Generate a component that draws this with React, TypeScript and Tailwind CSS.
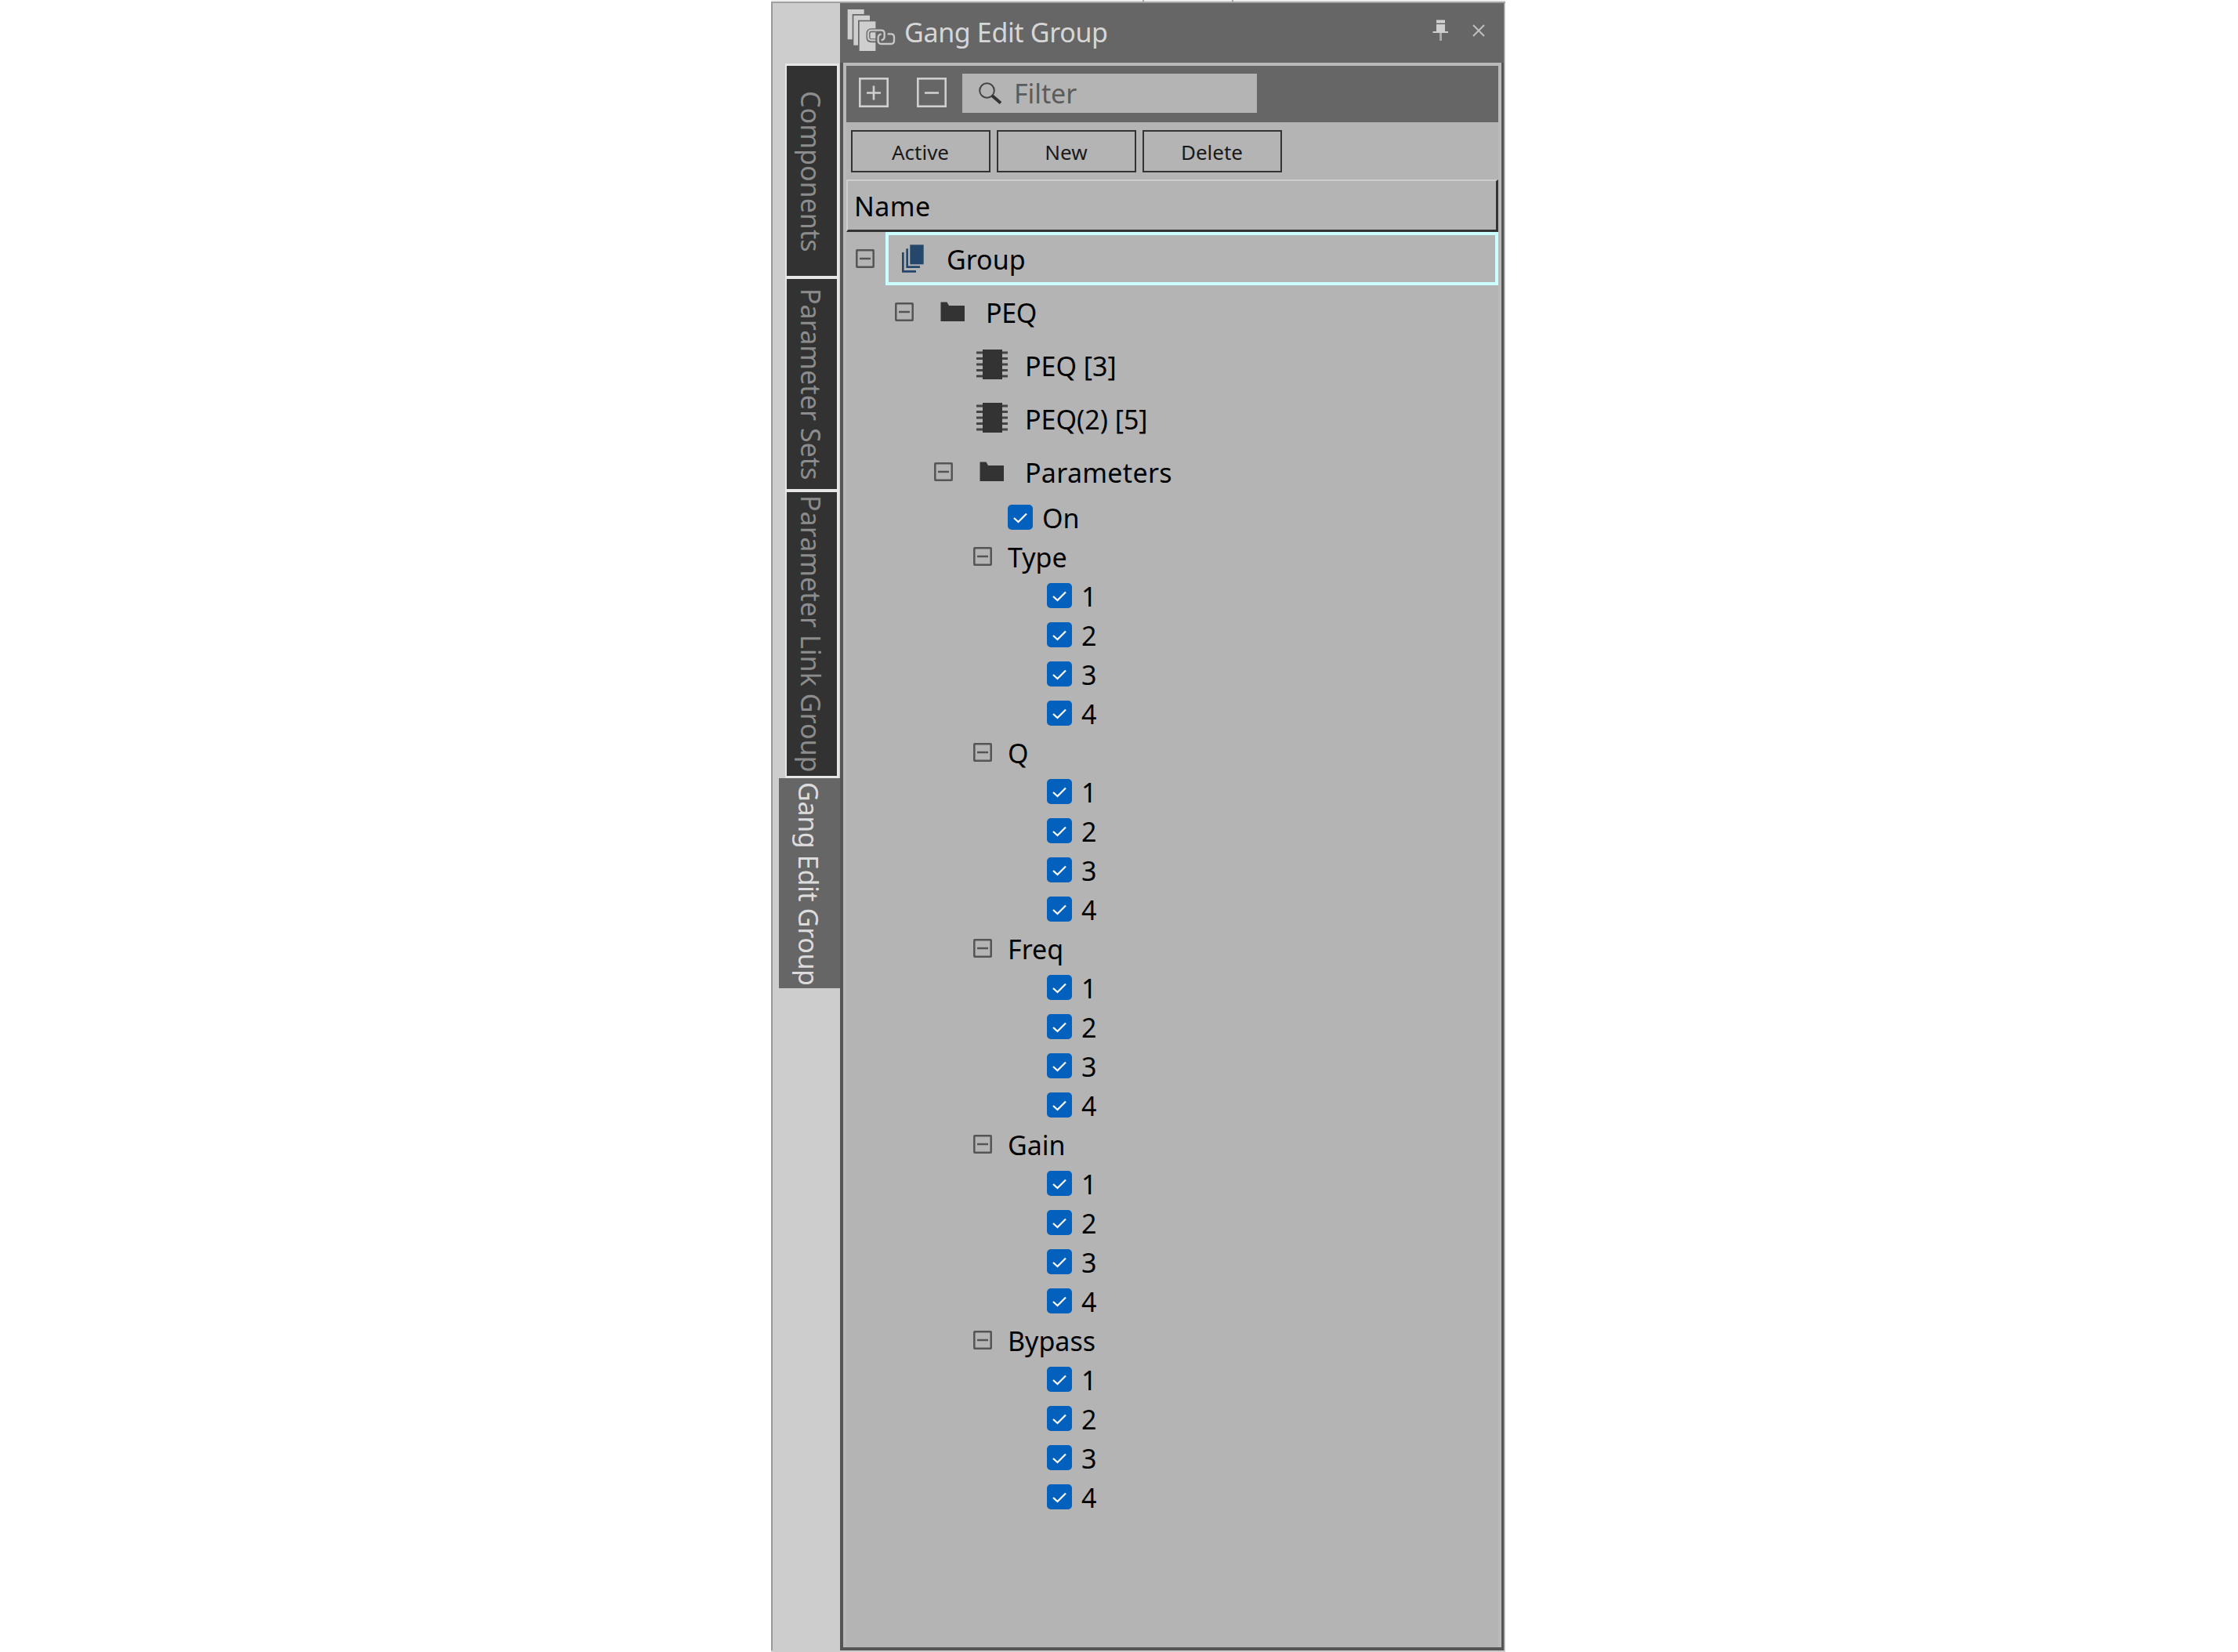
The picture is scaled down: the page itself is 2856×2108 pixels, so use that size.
import type { ReactNode } from "react";

const tabs = [
	{ name: "Components", size: "h-[268px]", spacing: "pt-0.5" },
	{ name: "Parameter Sets", size: "h-[268px]", spacing: "pt-0" },
	{ name: "Parameter Link Group", size: "h-[362px]", spacing: "pt-0" },
];

const params = ["Type", "Q", "Freq", "Gain", "Bypass"];

const Expander = () => (
	<svg viewBox="0 0 24 24" className="h-6 w-6 shrink-0" fill="none" stroke="#555">
		<rect x="1.3" y="1.3" width="21.4" height="21.4" rx="0.5" strokeWidth="2.5" />
		<path d="M5 12H19" strokeWidth="2.5" />
	</svg>
);

const Folder = () => (
	<svg viewBox="0 0 32 26" className="h-[26px] w-8 shrink-0" fill="#333">
		<path d="M0.5 1Q0.5 0.5 1 0.5H8.5L11 5H30.5Q31 5 31 5.5V25H0.5Z" />
	</svg>
);

const Chip = () => (
	<svg viewBox="0 0 40 38" className="mb-0.5 h-[38px] w-10 shrink-0" fill="#333">
		<path
			d="M0 4H40M0 11.5H40M0 19H40M0 26.5H40M0 34H40"
			stroke="#444"
			strokeWidth="2.8"
		/>
		<rect x="8" y="0" width="25" height="38" />
	</svg>
);

const Pages = () => (
	<svg viewBox="272 104 84 108" className="h-9 w-7 shrink-0" fill="#24476b">
		<rect x="303" y="105" width="52" height="75" />
		<path d="M288 120H296V186H341V194H288Z" />
		<path d="M272 134H280V203H326V211H272Z" />
	</svg>
);

const GangIcon = () => (
	<svg viewBox="312 30 192 174" className="h-[58px] w-16 shrink-0">
		<path d="M317 36H380V54H335V151H317Z" fill="#cfcfcf" />
		<path d="M340 59H402V77H357V173H340Z" fill="#cfcfcf" />
		<path d="M362 82H424V195H362Z" fill="#cfcfcf" />
		<g fill="none">
			<path
				d="M428 155H408Q396 155 396 143V128Q396 116 408 116H424"
				stroke="#666"
				strokeWidth="15"
			/>
			<path
				d="M424 154H408Q396 154 396 142V128Q396 116 408 116H446Q458 116 458 128V140Q458 151 446 154"
				stroke="#c8c8c8"
				strokeWidth="7"
			/>
			<path
				d="M446 130Q434 133 434 144V156Q434 168 446 168H483Q495 168 495 156V142Q495 130 483 130H470"
				stroke="#c8c8c8"
				strokeWidth="7"
			/>
		</g>
	</svg>
);

const Check = () => (
	<svg viewBox="0 0 32 32" className="h-8 w-8 shrink-0">
		<rect width="32" height="32" rx="5" fill="#0460bd" />
		<path
			d="M8 17L13.5 22L24 11.5"
			fill="none"
			stroke="#fff"
			strokeWidth="2.2"
		/>
	</svg>
);

const Label = ({ children }: { children: ReactNode }) => (
	<span className="pt-0.5">{children}</span>
);

const CheckRow = ({ name, indent }: { name: string; indent: string }) => (
	<li className={`flex h-[50px] items-center gap-3 ${indent}`}>
		<Check />
		<Label>{name}</Label>
	</li>
);

const SideTabs = () => (
	<div className="flex w-[88px] flex-col items-end border-l-2 border-[#999] bg-[#cdcdcd] pt-[77px]">
		<div className="mr-[1px] flex flex-col gap-1 border-[3px] border-l-2 border-[#e6e6e6] bg-[#e6e6e6] text-[#8c8c8c]">
			{tabs.map((tab) => (
				<div
					key={tab.name}
					className={`flex w-16 items-center justify-center bg-[#323232] pr-[3px] tracking-[0.05px] [writing-mode:vertical-rl] ${tab.size} ${tab.spacing}`}
				>
					{tab.name}
				</div>
			))}
		</div>
		<div className="flex h-[268px] w-[78px] items-center justify-center bg-[#666] pt-0.5 pr-0.5 tracking-[-0.35px] text-[#dcdcdc] [writing-mode:vertical-rl]">
			Gang Edit Group
		</div>
	</div>
);

const TitleBar = () => (
	<div className="flex h-[76px] items-start bg-[#666] pl-2 text-[#d6d6d6]">
		<div className="pt-1.5">
			<GangIcon />
		</div>
		<h1 className="ml-[10px] pt-[14px] tracking-[-0.35px]">Gang Edit Group</h1>
		<svg viewBox="0 0 20 28" className="mt-[21px] ml-auto h-7 w-5" fill="#cfcfcf">
			<rect x="5" y="0.5" width="11" height="4" />
			<path d="M5 6H16V15H20V17H0.5V15H5Z" />
			<rect x="9" y="17" width="3" height="10" fill="#a8a8a8" />
		</svg>
		<svg
			viewBox="0 0 16 16"
			className="mt-[27px] mr-6 ml-[31px] h-4 w-4"
			stroke="#c0c0c0"
			strokeWidth="2"
		>
			<path d="M1 1L15 15M15 1L1 15" />
		</svg>
	</div>
);

const Toolbar = () => (
	<div className="flex h-[72px] items-start bg-[#666] pt-[10px] pl-4">
		<svg
			viewBox="0 0 38 38"
			className="mt-[5px] h-[38px] w-[38px]"
			fill="none"
			stroke="#cfcfcf"
			strokeWidth="2.6"
		>
			<rect x="1.3" y="1.3" width="35.4" height="35.4" />
			<path d="M10 19.5H28M19 10.5V28.5" />
		</svg>
		<svg
			viewBox="0 0 38 38"
			className="mt-[5px] ml-9 h-[38px] w-[38px]"
			fill="none"
			stroke="#cfcfcf"
			strokeWidth="2.6"
		>
			<rect x="1.3" y="1.3" width="35.4" height="35.4" />
			<path d="M10 19.5H28" />
		</svg>
		<div className="ml-5 flex h-[50px] w-[376px] items-center bg-[#b4b4b4] pl-[21px] text-[#5c5c5c]">
			<svg viewBox="0 0 30 28" className="h-7 w-[30px]" fill="none">
				<circle cx="10.5" cy="10.5" r="9.3" stroke="#444" strokeWidth="2" />
				<path d="M17 17L28 26.5" stroke="#333" strokeWidth="4" />
			</svg>
			<span className="ml-[15px] tracking-[-0.1px]">Filter</span>
		</div>
	</div>
);

const Tree = () => (
	<ul>
		<li className="flex h-[68px] items-center pl-3">
			<Expander />
			<div className="ml-[14px] flex h-[68px] flex-1 items-center border-4 border-[#ccffff] pl-[17px]">
				<Pages />
				<span className="ml-[29px] pt-0.5">Group</span>
			</div>
		</li>
		<li className="flex h-[68px] items-center pl-[62px]">
			<Expander />
			<span className="ml-[34px]">
				<Folder />
			</span>
			<span className="ml-[26px] pt-0.5 tracking-[-0.4px]">PEQ</span>
		</li>
		<li className="flex h-[68px] items-center gap-[22px] pl-[166px]">
			<Chip />
			<Label>PEQ [3]</Label>
		</li>
		<li className="flex h-[68px] items-center gap-[22px] pl-[166px]">
			<Chip />
			<Label>PEQ(2) [5]</Label>
		</li>
		<li className="flex h-[67px] items-center pl-28">
			<Expander />
			<span className="ml-[34px]">
				<Folder />
			</span>
			<span className="ml-[26px] pt-0.5 tracking-[0.3px]">Parameters</span>
		</li>
		<CheckRow name="On" indent="pl-[206px]" />
		{params.map((param) => (
			<li key={param}>
				<div className="flex h-[50px] items-center gap-5 pl-[162px]">
					<Expander />
					<Label>{param}</Label>
				</div>
				<ul>
					{["1", "2", "3", "4"].map((n) => (
						<CheckRow key={n} name={n} indent="pl-64" />
					))}
				</ul>
			</li>
		))}
	</ul>
);

const App = () => {
	return (
		<main className="h-[2108px] w-[2856px] bg-white pl-[984px] font-['Noto_Sans',sans-serif] text-[34px] leading-[46px] whitespace-nowrap text-black">
			<div className="flex h-full w-[937px] flex-col bg-[#cdcdcd]">
				<div className="flex h-[2px] bg-[#eee]">
					<div className="ml-[474px] w-0.5 bg-[#aaa]" />
					<div className="ml-28 w-0.5 bg-[#aaa]" />
				</div>
				<div className="h-0.5 bg-[#a0a0a0]" />
				<div className="flex h-[2102px]">
					<SideTabs />
					<section className="flex w-[848px] flex-col border-r border-[#999] bg-[#555]">
						<TitleBar />
						<div className="mr-[3px] mb-1 ml-1 flex-1 border-x-4 border-t-4 border-[#b9b9b9] bg-[#b4b4b4]">
							<Toolbar />
							<div className="flex gap-2 pt-[10px] pl-1.5 text-[26px] text-[#1a1a1a]">
								{["Active", "New", "Delete"].map((name) => (
									<button
										key={name}
										className="h-[54px] w-[178px] border-2 border-[#333] pt-px pr-px"
									>
										{name}
									</button>
								))}
							</div>
							<div className="mt-[9px] h-[67px] border-t-2 border-r-[3px] border-b-[3px] border-l-2 border-[#333] border-t-[#cdcdcd] border-l-[#cdcdcd] pt-[9px] pl-2 tracking-[0.4px]">
								Name
							</div>
							<Tree />
						</div>
					</section>
				</div>
			</div>
		</main>
	);
};

export default App;
